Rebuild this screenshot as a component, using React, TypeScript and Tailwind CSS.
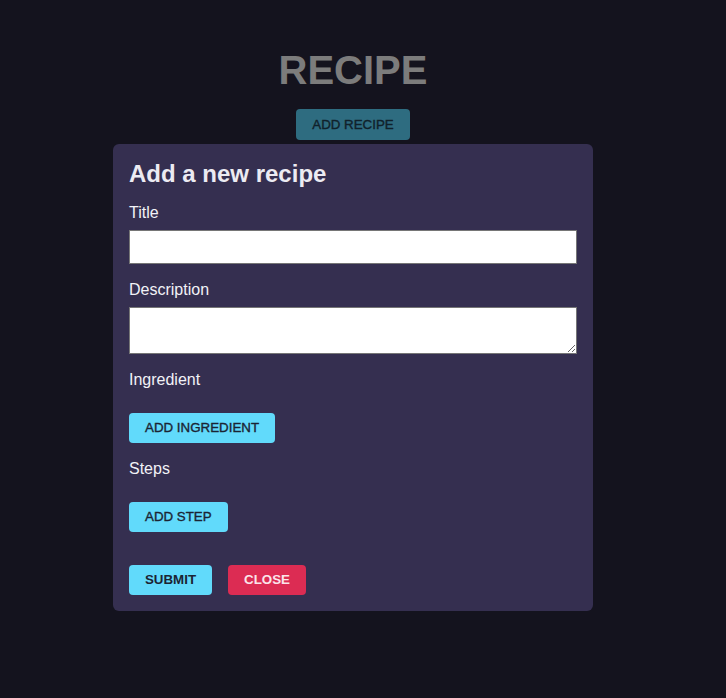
import { useState } from "react"

export default function App() {
  const [title, setTitle] = useState("")
  const [description, setDescription] = useState("")

  const btn =
    "h-[30px] rounded-[4px] px-4 text-[13.333px] font-medium uppercase text-[#1b2433] bg-[#61dafb] [-webkit-text-stroke:0.35px_#1b2433]"

  return (
    <div
      className="min-h-[698px] w-full bg-[#14131e]"
      style={{ fontFamily: '"Liberation Sans", Arial, sans-serif' }}
    >
      <div className="w-[706px] flex flex-col items-center">
        <h1 className="mt-[47px] text-[40px] leading-[46px] font-bold text-[#7c7c7c]">RECIPE</h1>
        <button className="mt-[16px] h-[31px] rounded-[4px] px-4 text-[13.333px] font-medium uppercase text-[#10212b] bg-[#2e6c80] [-webkit-text-stroke:0.35px_#10212b]">
          Add recipe
        </button>

        <div className="mt-[4px] w-[480px] rounded-[6px] bg-[#352f50] p-4 flex flex-col">
          <h2 className="text-[24px] leading-[28px] font-bold text-[#ecebf2]">Add a new recipe</h2>

          <label className="mt-[16px] text-[16px] leading-[18px] text-[#f2f2f7]">Title</label>
          <input
            value={title}
            onChange={(e) => setTitle(e.target.value)}
            className="mt-[8px] h-[34px] w-full bg-white border border-[#767676] px-2 text-black outline-none"
          />

          <label className="mt-[17px] text-[16px] leading-[18px] text-[#f2f2f7]">Description</label>
          <textarea
            value={description}
            onChange={(e) => setDescription(e.target.value)}
            className="mt-[8px] h-[47px] w-full bg-white border border-[#767676] px-2 text-black outline-none block"
          />

          <label className="mt-[17px] text-[16px] leading-[18px] text-[#f2f2f7]">Ingredient</label>
          <div className="mt-[24px]">
            <button className={btn}>Add ingredient</button>
          </div>

          <label className="mt-[17px] text-[16px] leading-[18px] text-[#f2f2f7]">Steps</label>
          <div className="mt-[24px]">
            <button className={btn}>Add step</button>
          </div>

          <div className="mt-[33px] flex gap-4">
            <button className="h-[30px] w-[83px] rounded-[4px] text-[13.333px] font-bold uppercase text-[#1b2433] bg-[#61dafb]">
              Submit
            </button>
            <button className="h-[30px] w-[78px] rounded-[4px] text-[13.333px] font-bold uppercase text-[#fbe4ea] bg-[#dc2c53]">
              Close
            </button>
          </div>
        </div>
      </div>
    </div>
  )
}
